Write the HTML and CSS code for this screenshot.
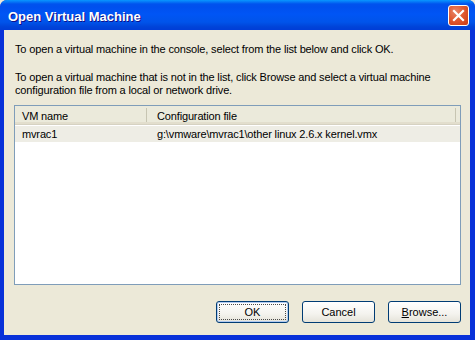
FILE: index.html
```html
<!DOCTYPE html>
<html>
<head>
<meta charset="utf-8">
<link rel="stylesheet" href="styles.css">
</head>
<body>
<div class="window">
  <div class="titlebar">
    <span class="title">Open Virtual Machine</span>
    <span class="close">
      <svg width="13" height="13" viewBox="0 0 13 13"><path d="M2 2 L11 11 M11 2 L2 11" stroke="#fff" stroke-width="2.2" stroke-linecap="square"/></svg>
    </span>
  </div>
  <div class="content">
    <p class="text first">To open a virtual machine in the console, select from the list below and click OK.</p>
    <p class="text second">To open a virtual machine that is not in the list, click Browse and select a virtual machine configuration file from a local or network drive.</p>
    <div class="list">
      <div class="header">
        <div class="hcell c1">VM name</div>
        <div class="hcell c2">Configuration file</div>
        <div class="hcell c3"></div>
      </div>
      <div class="row">
        <div class="cell c1">mvrac1</div>
        <div class="cell c2">g:\vmware\mvrac1\other linux 2.6.x kernel.vmx</div>
      </div>
    </div>
    <div class="buttons">
      <button class="btn default"><span class="focus">OK</span></button>
      <button class="btn">Cancel</button>
      <button class="btn"><u>B</u>rowse...</button>
    </div>
  </div>
</div>
</body>
</html>
```
FILE: styles.css
```css
* { box-sizing: border-box; }
html, body { margin: 0; padding: 0; background: #ECE9D8; }
body { width: 475px; height: 340px; overflow: hidden; font-family: "Liberation Sans", Arial, sans-serif; font-size: 11px; color: #000; letter-spacing: -0.15px; }
.window {
  width: 475px; height: 340px;
  display: flex; flex-direction: column;
  background: #0831D9;
  border-radius: 7px 7px 0 0;
}
.titlebar {
  height: 30px; flex: none;
  display: flex; align-items: center; justify-content: space-between;
  padding: 0 6px 0 8px;
  border-radius: 7px 7px 0 0;
  background: linear-gradient(to bottom, #0997FF 0px, #0053EE 4px, #0050EE 7px, #0055F5 14px, #0054EA 22px, #0043D8 27px, #003DD7 30px);
}
.title {
  color: #fff; font-weight: bold; font-size: 13px; letter-spacing: 0;
  text-shadow: 1px 1px #0F1089;
  padding-top: 2px;
}
.close {
  width: 21px; height: 21px;
  border: 1px solid #fff; border-radius: 3px;
  background: radial-gradient(circle at 35% 30%, #E8866A 0%, #E05A32 45%, #C93A13 100%);
  display: flex; align-items: center; justify-content: center;
  margin-top: 1px;
}
.close svg { display: block; }
.content {
  flex: 1;
  margin: 0 5px 5px 4px;
  background: #ECE9D8;
  padding: 11px 9px 0 10px;
  display: flex; flex-direction: column;
}
.text { margin: 0; padding-left: 1px; line-height: 13px; }
.first { margin-top: 2px; }
.second { margin-top: 15px; }
.list {
  margin-top: 8px;
  height: 180px;
  border: 1px solid #7F9DB9;
  background: #fff;
}
.header {
  display: grid; grid-template-columns: 132px 309px 1fr;
  height: 19px;
  background: #EBEADB;
  border-bottom: 1px solid #D6D2C2;
  box-shadow: inset 0 -2px #E2DECD;
}
.hcell { padding: 4px 0 0 7px; height: 17px; }
.hcell.c1 { border-right: 1px solid #C7C5B2; margin-top: 2px; padding-top: 2px; height: 14px; }
.hcell.c2 { padding-left: 10px; border-right: 1px solid #C7C5B2; margin-top: 2px; padding-top: 2px; height: 14px; }
.row {
  display: grid; grid-template-columns: 132px 1fr;
  height: 16px; background: #EEEDE5;
  margin-top: 1px;
}
.cell { padding: 1px 0 0 7px; line-height: 14px; }
.cell.c2 { padding-left: 10px; }
.buttons {
  display: flex; justify-content: flex-end; gap: 13px;
  margin-top: 16px; padding-right: 0;
}
.btn {
  width: 73px; height: 22px;
  border: 1px solid #003C74; border-radius: 3px;
  background: linear-gradient(to bottom, #FFFFFF 0%, #F4F3EE 60%, #E5E3D9 100%);
  font-family: "Liberation Sans", Arial, sans-serif; font-size: 11px; color: #000;
  padding: 0; margin: 0;
  display: flex; align-items: center; justify-content: center;
}
.btn.default { box-shadow: inset 0 0 0 1px #B2CBF0; }
.btn .focus {
  display: flex; align-items: center; justify-content: center;
  width: 67px; height: 16px;
  border: 1px dotted #4A4A4A;
}
```
